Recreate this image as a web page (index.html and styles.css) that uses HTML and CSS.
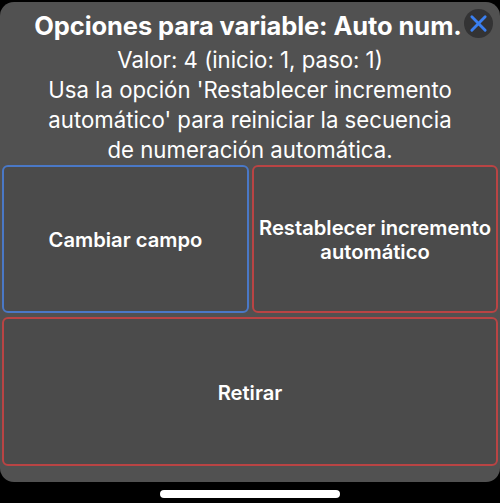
FILE: index.html
```html
<!DOCTYPE html>
<html lang="es">
<head>
<meta charset="utf-8">
<link rel="stylesheet" href="styles.css">
</head>
<body>
<div class="screen">
  <div class="sheet">
    <div class="header">
      <h1 class="title">Opciones para variable: Auto num.</h1>
      <p class="info">Valor: 4 (inicio: 1, paso: 1)<br>Usa la opción 'Restablecer incremento<br>automático' para reiniciar la secuencia<br>de numeración automática.</p>
    </div>
    <button class="close" aria-label="Cerrar">
      <svg viewBox="0 0 20 20" width="19" height="19"><path d="M3 3 L17 17 M17 3 L3 17" stroke="#3a7ff0" stroke-width="3" stroke-linecap="round" fill="none"/></svg>
    </button>
    <div class="actions">
      <button class="action blue">Cambiar campo</button>
      <button class="action red">Restablecer incremento<br>automático</button>
      <button class="action red wide">Retirar</button>
    </div>
  </div>
  <div class="home-bar"></div>
</div>
</body>
</html>
```
FILE: styles.css
```css
html, body {
  margin: 0;
  padding: 0;
  background: #000;
}
.screen {
  width: 500px;
  height: 503px;
  display: flex;
  flex-direction: column;
  align-items: center;
  font-family: Inter, "Noto Sans", sans-serif;
  color: #fff;
}
.sheet {
  position: relative;
  box-sizing: border-box;
  width: 500px;
  height: 480px;
  margin-top: 2px;
  padding: 0 2px;
  background: #515151;
  border-radius: 14px;
  display: flex;
  flex-direction: column;
}
.header {
  text-align: center;
  padding-top: 8px;
}
.title {
  margin: 0;
  font-size: 25.5px;
  line-height: 32px;
  font-weight: 700;
  letter-spacing: -0.1px;
  padding-right: 4px;
}
.info {
  margin: 3px 0 0;
  font-size: 22.2px;
  line-height: 30px;
  font-weight: 400;
}
.close {
  position: absolute;
  top: 7px;
  right: 7px;
  width: 29px;
  height: 29px;
  border-radius: 50%;
  border: none;
  padding: 0;
  background: #333334;
  display: flex;
  align-items: center;
  justify-content: center;
}
.actions {
  display: grid;
  grid-template-columns: 247px 246px;
  grid-template-rows: 148px 149px;
  column-gap: 3px;
  row-gap: 4px;
}
.action {
  box-sizing: border-box;
  background: #4b4b4b;
  border: 2px solid;
  border-radius: 6px;
  color: #fff;
  font-family: Inter, "Noto Sans", sans-serif;
  font-size: 20.2px;
  font-weight: 600;
  line-height: 24px;
  padding: 2px 0 0;
  text-align: center;
}
.blue { border-color: #4a78c6; }
.red { border-color: #b94444; }
.wide { grid-column: 1 / 3; }
.home-bar {
  margin-top: 8px;
  width: 180px;
  height: 8px;
  border-radius: 4px;
  background: #fff;
}
```
